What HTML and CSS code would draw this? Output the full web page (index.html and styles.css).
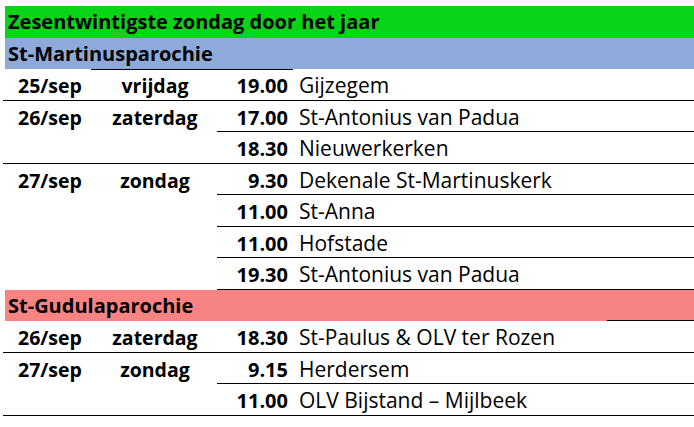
FILE: index.html
```html
<!DOCTYPE html>
<html lang="nl">
<head>
<meta charset="utf-8">
<title>Zesentwintigste zondag door het jaar</title>
<link rel="stylesheet" href="styles.css">
</head>
<body>
<div class="sheet">
  <div class="band band-green">Zesentwintigste zondag door het jaar</div>
  <div class="band band-blue">St-Martinusparochie</div>

  <div class="c date bb">25/sep</div>
  <div class="c day bb bt">vrijdag</div>
  <div class="c time bb bt">19.00</div>
  <div class="c loc bb">Gijzegem</div>

  <div class="c date bb span2">26/sep</div>
  <div class="c day bb span2">zaterdag</div>
  <div class="c time bb">17.00</div>
  <div class="c loc bb">St-Antonius van Padua</div>
  <div class="c time bb">18.30</div>
  <div class="c loc bb">Nieuwerkerken</div>

  <div class="c date span4">27/sep</div>
  <div class="c day span4">zondag</div>
  <div class="c time bb">9.30</div>
  <div class="c loc bb">Dekenale St-Martinuskerk</div>
  <div class="c time bb">11.00</div>
  <div class="c loc bb">St-Anna</div>
  <div class="c time bb">11.00</div>
  <div class="c loc bb">Hofstade</div>
  <div class="c time bb">19.30</div>
  <div class="c loc bb">St-Antonius van Padua</div>

  <div class="band band-pink">St-Gudulaparochie</div>

  <div class="c date bb">26/sep</div>
  <div class="c day bb">zaterdag</div>
  <div class="c time bb">18.30</div>
  <div class="c loc bb">St-Paulus &amp; OLV ter Rozen</div>

  <div class="c date bb span2">27/sep</div>
  <div class="c day bb span2">zondag</div>
  <div class="c time bb">9.15</div>
  <div class="c loc bb">Herdersem</div>
  <div class="c time bb">11.00</div>
  <div class="c loc bb">OLV Bijstand – Mijlbeek</div>
</div>
</body>
</html>
```
FILE: styles.css
```css
html, body {
  margin: 0;
  padding: 0;
  background: #ffffff;
}

body {
  font-family: "Open Sans", "Noto Sans", "DejaVu Sans", sans-serif;
  color: #000000;
}

.sheet {
  margin: 6px 0 0 3px;
  width: 691px;
  display: grid;
  grid-template-columns: 88px 126px 76px 1fr;
  grid-auto-rows: 31.5px;
}

.band {
  grid-column: 1 / -1;
  margin-left: 2px;
  padding-left: 3px;
  font-weight: 700;
  font-size: 20px;
  line-height: 31.5px;
  position: relative;
  white-space: nowrap;
}

.band-green { background: #07d417; }
.band-blue { background: #8eaadb; }
.band-pink { background: #f78383; }

.band-pink::after {
  content: "";
  position: absolute;
  right: 0;
  bottom: 0;
  width: 87px;
  height: 1px;
  background: #000;
}

.c {
  box-sizing: border-box;
  font-size: 19.5px;
  line-height: 31.5px;
  padding-top: 1px;
  white-space: nowrap;
  height: 100%;
}

.bb { border-bottom: 1px solid #000; }
.bt { border-top: 1px solid #000; padding-top: 0; }

.span2 { grid-row: span 2; }
.span4 { grid-row: span 4; }

.date {
  font-weight: 700;
  padding-left: 15px;
}

.day {
  font-weight: 700;
  text-align: center;
  padding-left: 2px;
}

.time {
  font-weight: 700;
  font-size: 20px;
  text-align: right;
  padding-right: 5px;
}

.loc {
  font-size: 21px;
  padding-left: 6px;
}
```
